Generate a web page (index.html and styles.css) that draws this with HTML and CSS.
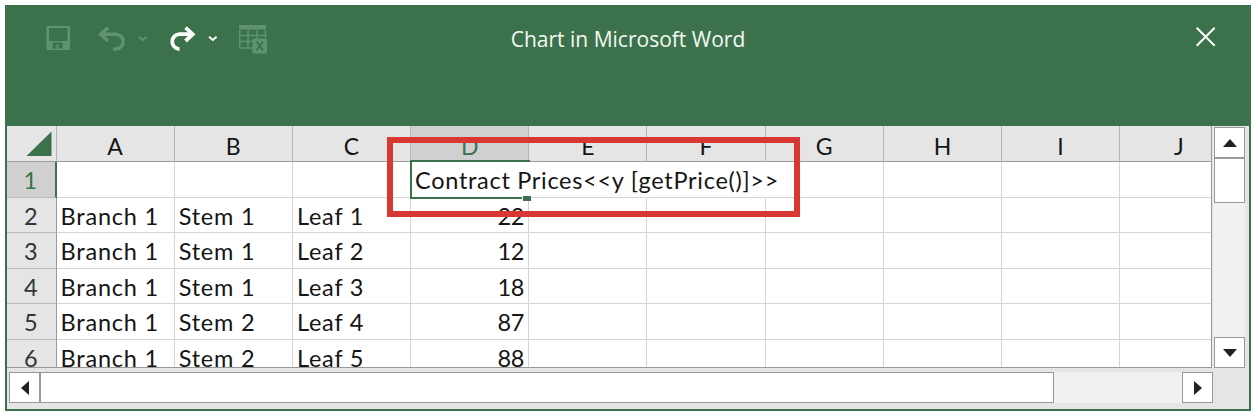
FILE: index.html
```html
<!DOCTYPE html>
<html lang="en">
<head>
<meta charset="utf-8">
<title>Chart in Microsoft Word</title>
<link rel="stylesheet" href="styles.css">
</head>
<body>
<div class="window">
  <header class="titlebar">
    <svg class="tools" width="290" height="60" viewBox="0 0 290 60" fill="none">
      <g class="dim">
        <path fill-rule="evenodd" fill="currentColor" d="M39.500 19h23.500v24H39.500zM42 21v12l1 1h16.500l1-1V21zM45.500 35.500v6h4v-4h2v4h4v-6z"/>
        <path stroke="currentColor" stroke-width="3.400" d="M93.500 27.200h14.500c5 0 8.200 3.300 8.200 7.300s-3 7.600-8.200 7.600h-2M101 20.700l-7.500 6.500 7.500 6.800"/>
        <path stroke="currentColor" stroke-width="1.800" d="M132 29.800l3.800 3.200 3.800-3.200"/>
        <path stroke="currentColor" stroke-width="1.500" d="M232.700 23v18h13M233 28.500h26M233 34.500h14M241 23v18M250 23v9M258.500 23v8"/>
        <path fill="currentColor" d="M232 18h27v4.500h-27z"/>
        <rect x="245.500" y="31.500" width="14.500" height="15" rx="1.500" fill="currentColor"/>
        <path class="cutout" stroke-width="1.800" d="M249.500 34.500l6.500 9M256 34.500l-6.500 9"/>
      </g>
      <g class="active">
        <path stroke="currentColor" stroke-width="3.800" d="M186 27.200h-13.500c-4 0-7.300 3.300-7.300 7.300s3.300 7.600 7.300 7.600M178.500 20.700l7.200 6.500-7.200 6.800"/>
        <path stroke="currentColor" stroke-width="1.900" d="M202 29.800l3.800 3.200 3.800-3.200"/>
      </g>
    </svg>
    <h1 class="title">Chart in Microsoft Word</h1>
    <svg class="close" width="20" height="20" viewBox="0 0 20 20"><path d="M.7.700l18 18M18.700.700l-18 18"/></svg>
  </header>
  <main class="workspace">
    <div class="sheet">
      <div class="row head">
        <div class="corner"><svg width="26" height="26"><path d="M25.500.500v24.500H.5z"/></svg></div>
        <div class="col">A</div><div class="col">B</div><div class="col">C</div><div class="col current">D</div><div class="col">E</div><div class="col">F</div><div class="col">G</div><div class="col">H</div><div class="col">I</div><div class="col">J</div>
      </div>
      <div class="row first">
        <div class="num current">1</div><div class="cell"></div><div class="cell"></div><div class="cell"></div><div class="cell open selected"><span class="formula">Contract Prices&lt;&lt;y [getPrice()]&gt;&gt;</span></div><div class="cell open"></div><div class="cell open"></div><div class="cell"></div><div class="cell"></div><div class="cell"></div><div class="cell"></div>
      </div>
      <div class="row"><div class="num">2</div><div class="cell">Branch 1</div><div class="cell">Stem 1</div><div class="cell">Leaf 1</div><div class="cell value">22</div><div class="cell"></div><div class="cell"></div><div class="cell"></div><div class="cell"></div><div class="cell"></div><div class="cell"></div></div>
      <div class="row"><div class="num">3</div><div class="cell">Branch 1</div><div class="cell">Stem 1</div><div class="cell">Leaf 2</div><div class="cell value">12</div><div class="cell"></div><div class="cell"></div><div class="cell"></div><div class="cell"></div><div class="cell"></div><div class="cell"></div></div>
      <div class="row"><div class="num">4</div><div class="cell">Branch 1</div><div class="cell">Stem 1</div><div class="cell">Leaf 3</div><div class="cell value">18</div><div class="cell"></div><div class="cell"></div><div class="cell"></div><div class="cell"></div><div class="cell"></div><div class="cell"></div></div>
      <div class="row"><div class="num">5</div><div class="cell">Branch 1</div><div class="cell">Stem 2</div><div class="cell">Leaf 4</div><div class="cell value">87</div><div class="cell"></div><div class="cell"></div><div class="cell"></div><div class="cell"></div><div class="cell"></div><div class="cell"></div></div>
      <div class="row last"><div class="num">6</div><div class="cell">Branch 1</div><div class="cell">Stem 2</div><div class="cell">Leaf 5</div><div class="cell value">88</div><div class="cell"></div><div class="cell"></div><div class="cell"></div><div class="cell"></div><div class="cell"></div><div class="cell"></div></div>
    </div>
    <div class="vscroll">
      <div class="button"><svg width="14" height="8"><path d="M0 8L7 0l7 8z"/></svg></div>
      <div class="thumb"></div>
      <div class="button down"><svg width="14" height="8"><path d="M0 0h14L7 8z"/></svg></div>
    </div>
  </main>
  <div class="hscroll">
    <div class="button"><svg width="8" height="14"><path d="M8 0v14L0 7z"/></svg></div>
    <div class="thumb"></div>
    <div class="button right"><svg width="8" height="14"><path d="M0 0v14l8-7z"/></svg></div>
  </div>
  <div class="highlight"></div>
</div>
</body>
</html>
```
FILE: styles.css
```css
* { box-sizing: border-box; }
body { margin: 0; padding: 5px; background: #fff; font-family: Lato, sans-serif; color: #151515; }
svg { display: block; }
.window { position: relative; width: 1246px; height: 406px; border: 2px solid #3b724b; background: #e5e5e5; overflow: hidden; }
.titlebar { display: grid; grid-template-columns: 290px 1fr 290px; height: 119px; background: #3b724b; color: #f3f8f4; }
.dim { color: #5f9370; }
.active { color: #fff; }
.cutout { stroke: #3b724b; }
.title { margin: 17px 0 0; text-align: center; font: 400 21px/30px "Open Sans", sans-serif; }
.close { justify-self: end; margin: 20px 33px 0 0; stroke: #fff; stroke-width: 2; }
.workspace { display: flex; gap: 1px; height: 242px; }
.sheet { width: 1205px; overflow: hidden; border-right: 1px solid #999; border-bottom: 1px solid #999; }
.row { display: grid; grid-template-columns: 49.500px repeat(10, 118.200px); grid-template-rows: 100%; width: 1232px; height: 35.600px; font-size: 23.500px; line-height: 36.500px; }
.row.head { height: 36px; line-height: 40px; font-size: 23px; }
.col, .corner { border-right: 1px solid #b5b5b5; border-bottom: 1px solid #9c9c9c; text-align: center; background: #e5e5e5; }
.corner { padding: 5px 0 0 19px; fill: #3b724b; }
.col.current { background: #d0d0d0; color: #3b724b; }
.num { padding-right: 1px; border-right: 1px solid #999; border-bottom: 1px solid #b9b9b9; background: #e5e5e5; color: #333; text-align: center; }
.num.current { border-right: 2px solid #3b724b; background: #d0d0d0; color: #3b724b; }
.cell { padding-left: 4px; border-right: 1px solid #d5d5d5; border-bottom: 1px solid #d5d5d5; background: #fff; white-space: nowrap; letter-spacing: .8px; }
.cell.open { border-right-color: #fff; }
.cell.value { padding-right: 4px; text-align: right; letter-spacing: -.2px; }
.row.last { height: 27px; }
.last .cell, .last .num { border-bottom: 0; }
.selected { position: relative; z-index: 1; }
.selected::before { content: ""; position: absolute; inset: -2px -2px -2px -1px; border: 2px solid #3b724b; border-right: 0; }
.selected::after { content: ""; position: absolute; right: -3px; bottom: -4px; width: 8px; height: 5px; border: solid #fff; border-width: 1px 0 0 1px; background: #3b724b; }
.formula { position: relative; letter-spacing: .7px; }
.button { display: flex; align-items: center; justify-content: center; flex: none; width: 31px; height: 31px; border: 1px solid #999; background: #fff; fill: #222; }
.thumb { border: 1px solid #999; background: #fff; }
.vscroll { display: flex; flex-direction: column; width: 32px; margin-top: 1px; padding-left: 1px; background: #f1f1f1; }
.vscroll .thumb { height: 45px; }
.down { margin-top: auto; }
.hscroll { display: flex; width: 1204px; height: 31px; margin: 4px 0 0 2px; background: #f1f1f1; }
.hscroll .thumb { width: 1014px; }
.right { margin-left: auto; }
.highlight { position: absolute; z-index: 2; left: 380px; top: 130px; width: 413px; height: 80px; border: 6px solid #d93832; }
```
